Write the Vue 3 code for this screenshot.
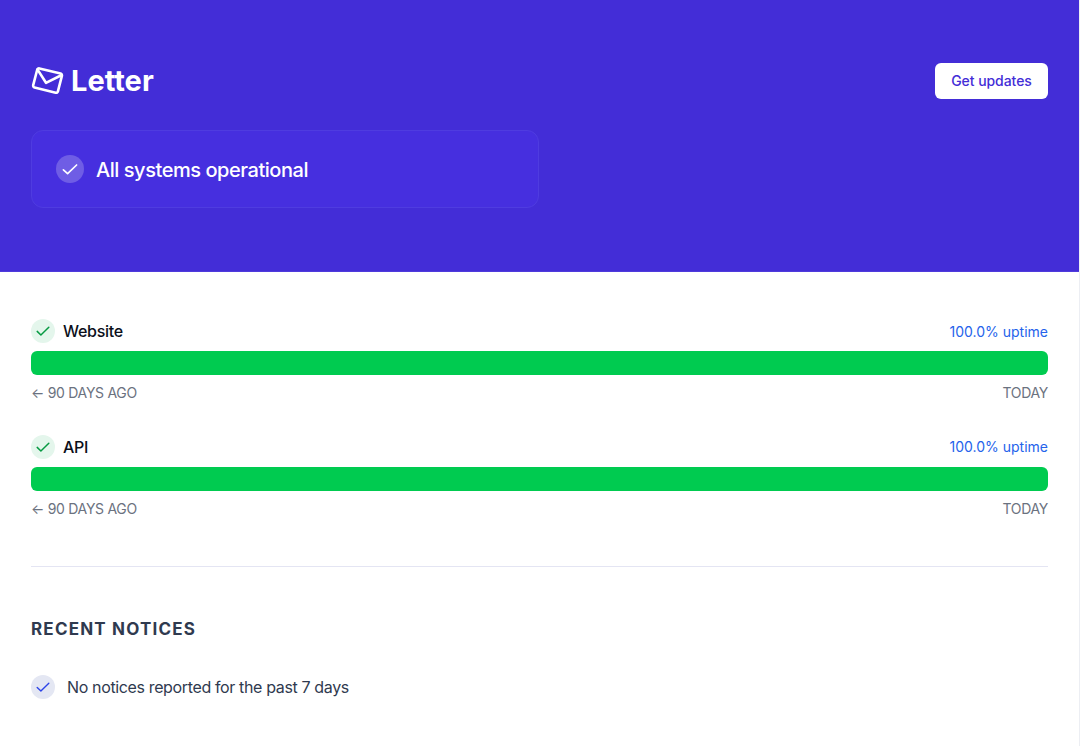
<script setup>
const services = [
  { name: 'Website', uptime: '100.0% uptime' },
  { name: 'API', uptime: '100.0% uptime' }
]
</script>

<template>
  <div class="page">
    <header class="hero">
      <div class="hero-top">
        <div class="brand">
          <svg class="brand-icon" width="34" height="30" viewBox="0 0 34 30" fill="none" stroke="#fff" stroke-width="2.6" stroke-linejoin="round" stroke-linecap="round">
            <path d="M8.4 2.4 29.6 7.6a1.8 1.8 0 0 1 1.3 2.2L26.9 25.4a1.8 1.8 0 0 1-2.2 1.3L3.5 21.4a1.8 1.8 0 0 1-1.3-2.2L6.2 3.7A1.8 1.8 0 0 1 8.4 2.4Z" />
            <path d="M6.6 3.6 15 16.8 30.8 9" />
          </svg>
          <span class="brand-name">Letter</span>
        </div>
        <button class="updates" type="button">Get updates</button>
      </div>
      <div class="status-card">
        <span class="status-icon">
          <svg width="16" height="16" viewBox="0 0 16 16" fill="none" stroke="#fff" stroke-width="1.7" stroke-linecap="round" stroke-linejoin="round"><path d="M1.4 8.8 5.6 12.6 14.6 4" /></svg>
        </span>
        <span class="status-text">All systems operational</span>
      </div>
    </header>

    <main class="content">
      <section class="services">
        <div v-for="s in services" :key="s.name" class="service">
          <div class="service-head">
            <div class="service-name">
              <span class="ok-icon">
                <svg width="14" height="14" viewBox="0 0 14 14" fill="none" stroke="#079a43" stroke-width="1.5" stroke-linecap="round" stroke-linejoin="round"><path d="M1.2 7.4 4.9 11 12.8 3.2" /></svg>
              </span>
              {{ s.name }}
            </div>
            <span class="uptime">{{ s.uptime }}</span>
          </div>
          <div class="bar"></div>
          <div class="service-foot">
            <span>← 90 DAYS AGO</span>
            <span>TODAY</span>
          </div>
        </div>
      </section>

      <hr class="divider" />

      <section class="notices">
        <h2 class="notices-title">RECENT NOTICES</h2>
        <div class="notice">
          <span class="notice-icon">
            <svg width="14" height="14" viewBox="0 0 14 14" fill="none" stroke="#2d44e8" stroke-width="1.4" stroke-linecap="round" stroke-linejoin="round"><path d="M1.2 7.4 4.9 11 12.8 3.2" /></svg>
          </span>
          No notices reported for the past 7 days
        </div>
      </section>
    </main>
  </div>
</template>

<style>
body { background: #fff; }
</style>

<style scoped>
.page {
  height: 746px; overflow: hidden; background: #fff;
  border-right: 1px solid #eceef3;
  font-family: Inter, "Liberation Sans", sans-serif;
}
.hero { height: 272px; box-sizing: border-box; background: #432dd7; padding: 63px 31px 0; border-bottom: 1px solid #4f3bdc; }
.hero-top { display: flex; align-items: center; justify-content: space-between; }
.brand { display: flex; align-items: center; gap: 6px; }
.brand-icon { display: block; }
.brand-name { font-size: 29px; font-weight: 700; line-height: 36px; color: #fff; }
.updates {
  width: 113px; height: 36px; padding: 0; border: 0; border-radius: 6px; background: #fff;
  color: #432dd7; font: 500 14px/20px Inter, "Liberation Sans", sans-serif; letter-spacing: -0.05px;
}
.status-card {
  width: 508px; height: 78px; box-sizing: border-box; margin-top: 31px; padding: 0 24px;
  display: flex; align-items: center; gap: 12px;
  background: #462fdf; border: 1px solid #4f3ce0; border-radius: 12px;
}
.status-icon {
  width: 28px; height: 28px; border-radius: 50%; background: #6f5de5;
  display: flex; align-items: center; justify-content: center;
}
.status-text { color: #fff; font-size: 20px; font-weight: 500; line-height: 28px; letter-spacing: -0.45px; padding-top: 1px; }
.content { padding: 47px 31px 0; }
.service { margin-bottom: 31.5px; }
.service:last-child { margin-bottom: 0; }
.service-head { display: flex; align-items: center; justify-content: space-between; height: 24px; }
.service-name { display: flex; align-items: center; gap: 8px; font-size: 16px; font-weight: 450; letter-spacing: -0.3px; color: #0b0f1a; }
.ok-icon {
  width: 24px; height: 24px; border-radius: 50%; background: #e4f6ec;
  display: flex; align-items: center; justify-content: center;
}
.uptime { font-size: 14px; color: #2563eb; }
.bar { height: 24px; margin-top: 8px; border-radius: 6px; background: #00cb50; }
.service-foot {
  display: flex; justify-content: space-between; margin-top: 8px;
  font-size: 14px; line-height: 20px; letter-spacing: -0.3px; color: #6b7280;
}
.divider { margin: 47.5px 0 0; border: 0; border-top: 1px solid #e4e5f3; }
.notices { padding-top: 52px; }
.notices-title { margin: 0; font-size: 17px; line-height: 20px; font-weight: 700; letter-spacing: 1.2px; color: #2f3a4f; }
.notice { display: flex; align-items: center; gap: 12px; margin-top: 36px; font-size: 16px; letter-spacing: -0.36px; color: #2f3a4f; }
.notice-icon {
  width: 24px; height: 24px; border-radius: 50%; background: #e4e7f3;
  display: flex; align-items: center; justify-content: center;
}
</style>
